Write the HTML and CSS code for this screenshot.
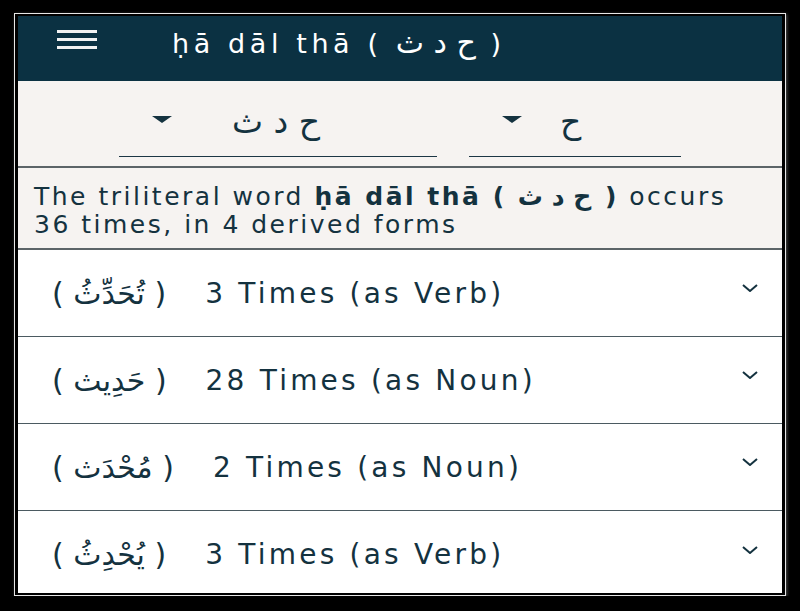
FILE: index.html
```html
<!DOCTYPE html>
<html lang="en">
	<head>
		<meta charset="UTF-8" />
		<meta name="viewport" content="width=device-width, initial-scale=1.0" />
		<title>ḥā dāl thā - Root Occurrences</title>
		<link rel="stylesheet" href="styles.css">
	</head>
	<body>
		<div class="frame">
			<div class="app">
				<div class="topbar">
					<div class="menu-icon">
						<span></span>
						<span></span>
						<span></span>
					</div>
					<h1 class="title">ḥā dāl thā ( <span class="ar" dir="rtl">ح د ث</span> )</h1>
				</div>

				<div class="selectors">
					<div class="dropdown dropdown-root">
						<span class="caret"></span>
						<span class="dropdown-value" dir="rtl">ح د ث</span>
					</div>
					<div class="dropdown dropdown-letter">
						<span class="caret"></span>
						<span class="dropdown-value" dir="rtl">ح</span>
					</div>
				</div>

				<div class="summary">
					The triliteral word <b>ḥā dāl thā ( <span class="ar" dir="rtl">ح د ث</span> )</b> occurs
					36 times, in 4 derived forms
				</div>

				<div class="forms">
					<div class="form-row">
						<span class="form-arabic" dir="rtl">( تُحَدِّثُ )</span>
						<span class="form-count">3 Times (as Verb)</span>
						<svg class="chevron" width="16" height="8" viewBox="0 0 16 8"><polyline points="1,1 8,7 15,1" /></svg>
					</div>
					<div class="form-row">
						<span class="form-arabic" dir="rtl">( حَدِيث )</span>
						<span class="form-count">28 Times (as Noun)</span>
						<svg class="chevron" width="16" height="8" viewBox="0 0 16 8"><polyline points="1,1 8,7 15,1" /></svg>
					</div>
					<div class="form-row">
						<span class="form-arabic" dir="rtl">( مُحْدَث )</span>
						<span class="form-count">2 Times (as Noun)</span>
						<svg class="chevron" width="16" height="8" viewBox="0 0 16 8"><polyline points="1,1 8,7 15,1" /></svg>
					</div>
					<div class="form-row">
						<span class="form-arabic" dir="rtl">( يُحْدِثُ )</span>
						<span class="form-count">3 Times (as Verb)</span>
						<svg class="chevron" width="16" height="8" viewBox="0 0 16 8"><polyline points="1,1 8,7 15,1" /></svg>
					</div>
				</div>
			</div>
		</div>
	</body>
</html>
```

FILE: styles.css
```css
* {
	margin: 0;
	padding: 0;
	box-sizing: border-box;
}

body {
	font-family: "DejaVu Sans", "Noto Sans", sans-serif;
	background: #000;
	color: #14323f;
}

.frame {
	width: 772px;
	margin: 13px 0 0 14px;
	padding: 2px 3px;
	border: 1px solid #e6e6e6;
	box-shadow: 1px 1px 3px rgba(255, 255, 255, 0.3);
}

.app {
	height: 577px;
	background: white;
	overflow: hidden;
}

.ar {
	padding-right: 0.2em;
}

/* top bar */
.topbar {
	height: 65px;
	background: #0b3142;
	display: flex;
	align-items: flex-start;
	padding: 14px 0 0 39px;
	color: white;
}

.menu-icon {
	width: 40px;
	display: flex;
	flex-direction: column;
	gap: 5px;
}

.menu-icon span {
	height: 3px;
	background: #f2f2f2;
}

.title {
	margin: -4px 0 0 75px;
	font-size: 27px;
	font-weight: normal;
	letter-spacing: 4.6px;
	line-height: 34px;
	white-space: nowrap;
}

.title .ar {
	font-size: 30px;
}

/* dropdowns */
.selectors {
	height: 87px;
	background: #f6f3f1;
	border-bottom: 2px solid #5c6468;
	display: flex;
	justify-content: center;
	gap: 32px;
	padding-top: 24px;
}

.dropdown {
	height: 52px;
	border-bottom: 1.5px solid #1c3644;
	display: flex;
	align-items: flex-start;
	padding-left: 33px;
}

.dropdown-root {
	width: 318px;
}

.dropdown-letter {
	width: 212px;
}

.caret {
	width: 0;
	height: 0;
	margin-top: 11px;
	border-left: 10px solid transparent;
	border-right: 10px solid transparent;
	border-top: 7px solid #14323f;
}

.dropdown-value {
	font-size: 33px;
	line-height: 40px;
	margin-top: -3px;
}

.dropdown-root .dropdown-value {
	margin-left: 60px;
}

.dropdown-letter .dropdown-value {
	margin-left: 38px;
}

/* summary */
.summary {
	background: #f6f3f1;
	border-bottom: 2px solid #5c6468;
	padding: 15px 16px 9px;
	font-size: 25px;
	line-height: 28px;
	letter-spacing: 2.5px;
}

/* derived forms */
.form-row {
	height: 87px;
	border-bottom: 1.5px solid #4b5a61;
	display: flex;
	align-items: center;
	padding: 0 24px 0 34px;
}

.form-row:last-child {
	border-bottom: none;
}

.form-arabic {
	font-size: 30px;
	white-space: nowrap;
}

.form-count {
	flex: 1;
	margin-left: 39px;
	font-size: 28px;
	letter-spacing: 3.2px;
}

.chevron {
	margin-top: -10px;
	fill: none;
	stroke: #14323f;
	stroke-width: 2;
}
```
